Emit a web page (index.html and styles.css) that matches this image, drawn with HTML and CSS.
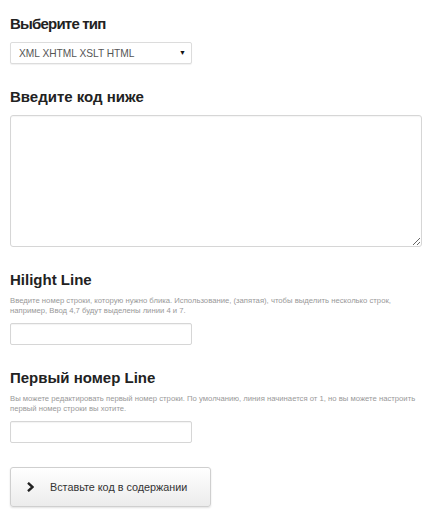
FILE: index.html
```html
<!DOCTYPE html>
<html lang="ru">
<head>
<meta charset="utf-8">
<title>Подсветка кода</title>
<link rel="stylesheet" href="styles.css">
</head>
<body>
<form class="form">
  <h2 class="title title-first">Выберите тип</h2>
  <div class="select-wrap">
    <select class="select">
      <option>XML XHTML XSLT HTML</option>
    </select>
    <span class="select-arrow">&#9660;</span>
  </div>

  <h2 class="title title-gap">Введите код ниже</h2>
  <textarea class="code"></textarea>

  <h2 class="title title-gap">Hilight Line</h2>
  <p class="hint">Введите номер строки, которую нужно блика. Использование, (запятая), чтобы выделить несколько строк, например, Ввод 4,7 будут выделены линии 4 и 7.</p>
  <input class="field" type="text">

  <h2 class="title title-gap">Первый номер Line</h2>
  <p class="hint">Вы можете редактировать первый номер строки. По умолчанию, линия начинается от 1, но вы можете настроить первый номер строки вы хотите.</p>
  <input class="field" type="text">

  <button class="btn" type="button">
    <svg class="btn-icon" width="7" height="10" viewBox="0 0 7 10"><path d="M1 0.8 L5.6 5 L1 9.2" fill="none" stroke="#222" stroke-width="2.4"/></svg>
    <span>Вставьте код в содержании</span>
  </button>
</form>
</body>
</html>
```

FILE: styles.css
```css
html, body {
  margin: 0;
  padding: 0;
  background: #ffffff;
}

body {
  font-family: "Liberation Sans", Arial, sans-serif;
  color: #222;
}

.form {
  display: flex;
  flex-direction: column;
  align-items: flex-start;
  padding: 15px 4px 20px 10px;
}

.title {
  margin: 0;
  font-size: 15px;
  line-height: 18px;
  font-weight: bold;
  color: #222;
}

.title-first {
  letter-spacing: -0.8px;
}

.title-gap {
  margin-top: 24px;
}

.select-wrap {
  position: relative;
  margin-top: 9px;
  width: 182px;
  height: 22px;
}

.select {
  appearance: none;
  -webkit-appearance: none;
  box-sizing: border-box;
  width: 182px;
  height: 22px;
  margin: 0;
  padding: 0 20px 0 8px;
  border: 1px solid #dcdcdc;
  border-radius: 2px;
  background: #fff;
  box-shadow: 0 1px 1px rgba(0,0,0,0.06);
  font-family: "Liberation Sans", Arial, sans-serif;
  font-size: 10.2px;
  color: #555;
  outline: none;
}

.select-arrow {
  position: absolute;
  right: 6px;
  top: 6px;
  font-size: 7px;
  line-height: 10px;
  color: #111;
  pointer-events: none;
}

.code {
  box-sizing: border-box;
  display: block;
  width: 412px;
  height: 132px;
  margin: 9px 0 0 0;
  padding: 4px;
  border: 1px solid #d6d6d6;
  border-radius: 3px;
  background: #fff;
  box-shadow: inset 0 1px 1px rgba(0,0,0,0.04);
  outline: none;
}

.hint {
  margin: 7px 0 0 0;
  font-size: 7.7px;
  line-height: 10px;
  color: #999;
  max-width: 414px;
}

.field {
  box-sizing: border-box;
  width: 182px;
  height: 22px;
  margin: 7px 0 0 0;
  padding: 0 5px;
  border: 1px solid #d6d6d6;
  border-radius: 2px;
  background: #fff;
  box-shadow: inset 0 1px 1px rgba(0,0,0,0.05);
  outline: none;
}

.btn {
  box-sizing: border-box;
  display: flex;
  align-items: center;
  gap: 16px;
  width: 201px;
  height: 40px;
  margin-top: 24px;
  padding: 0 0 0 16px;
  border: 1px solid #cfcfcf;
  border-radius: 3px;
  background: linear-gradient(#ffffff, #ececec);
  box-shadow: 0 1px 2px rgba(0,0,0,0.12);
  font-family: "Liberation Sans", Arial, sans-serif;
  font-size: 10.8px;
  color: #333;
  cursor: pointer;
}

.btn-icon {
  display: block;
  flex: none;
}
```
